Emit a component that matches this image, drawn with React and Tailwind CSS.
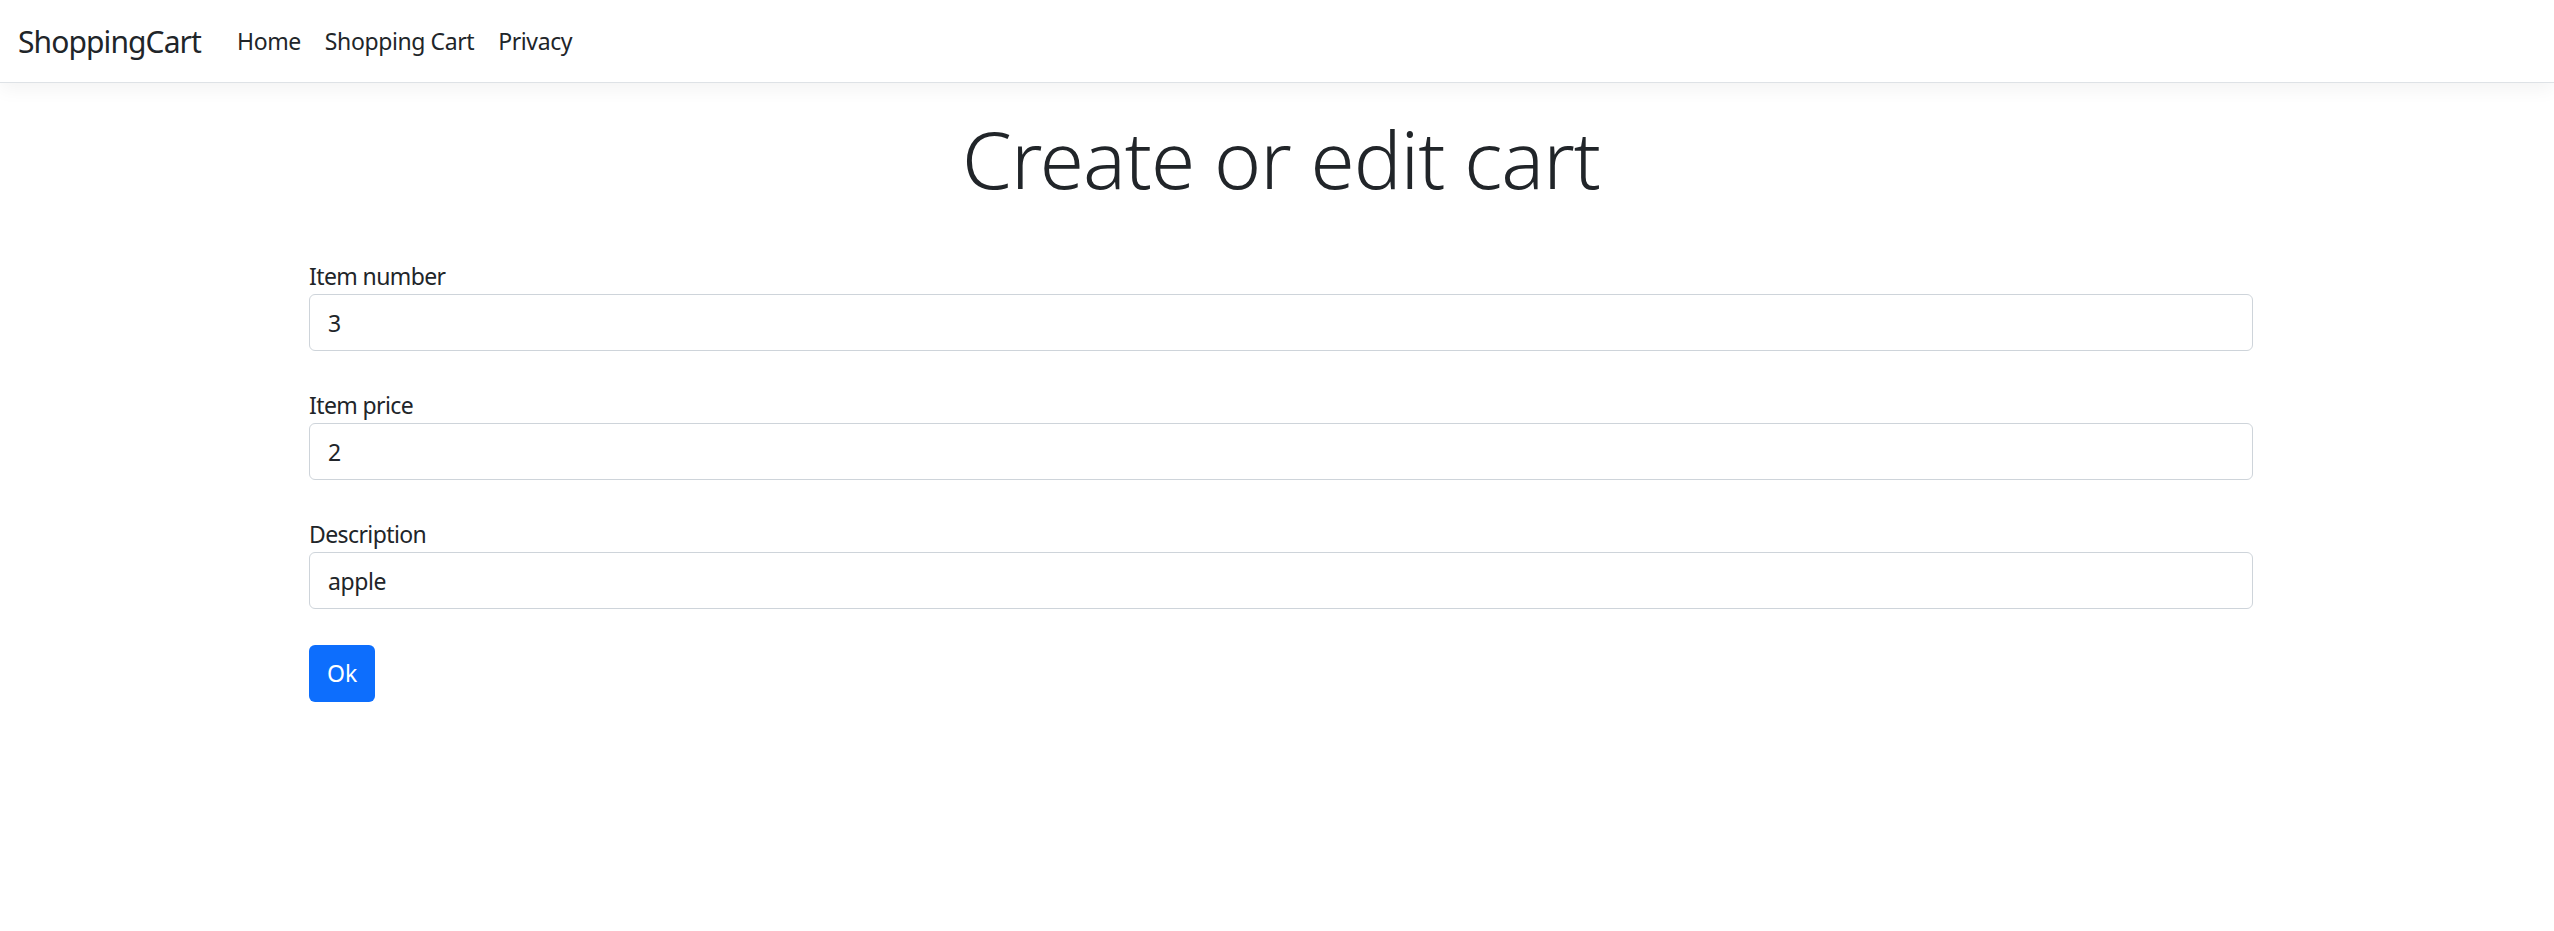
const FONT = "font-['Noto_Sans','Open_Sans',sans-serif]"

function Field({ label, value }) {
  return (
    <div className="mb-[36px]">
      <label className="block text-[23px] leading-[36px] tracking-[-0.6px] text-[#212529]">{label}</label>
      <input
        type="text"
        defaultValue={value}
        className="block w-full h-[57px] px-[18px] text-[23px] tracking-[-0.4px] text-[#212529] bg-white border border-[#ced4da] rounded-[6px] outline-none"
      />
    </div>
  )
}

export default function App() {
  return (
    <div className={`min-h-[931px] bg-white text-[#212529] ${FONT}`}>
      <nav className="h-[83px] flex items-center px-[18px] bg-white border-b border-[#dee2e6] shadow-[0_6px_18px_rgba(0,0,0,0.05)]">
        <a className="mr-[24px] text-[30px] leading-[45px] text-[#212529] tracking-[-0.9px]">ShoppingCart</a>
        <ul className="flex items-center">
          <li><a className="block px-[12px] text-[23px] tracking-[-0.4px] text-[#212529]">Home</a></li>
          <li><a className="block px-[12px] text-[23px] tracking-[-0.4px] text-[#212529]">Shopping Cart</a></li>
          <li><a className="block px-[12px] text-[23px] tracking-[-0.4px] text-[#212529]">Privacy</a></li>
        </ul>
      </nav>

      <div className="pl-[8px]">
        <main className="max-w-[1980px] mx-auto px-[18px] pt-[27px]">
          <div className="text-center">
            <h1 className="text-[80px] leading-[96px] font-light mb-[52px] tracking-[-1px]">Create or edit cart</h1>
          </div>
          <form>
            <Field label="Item number" value="3" />
            <Field label="Item price" value="2" />
            <Field label="Description" value="apple" />
            <button type="button" className="h-[57px] px-[18px] text-[23px] text-white bg-[#0d6efd] rounded-[6px]">
              Ok
            </button>
          </form>
        </main>
      </div>
    </div>
  )
}
